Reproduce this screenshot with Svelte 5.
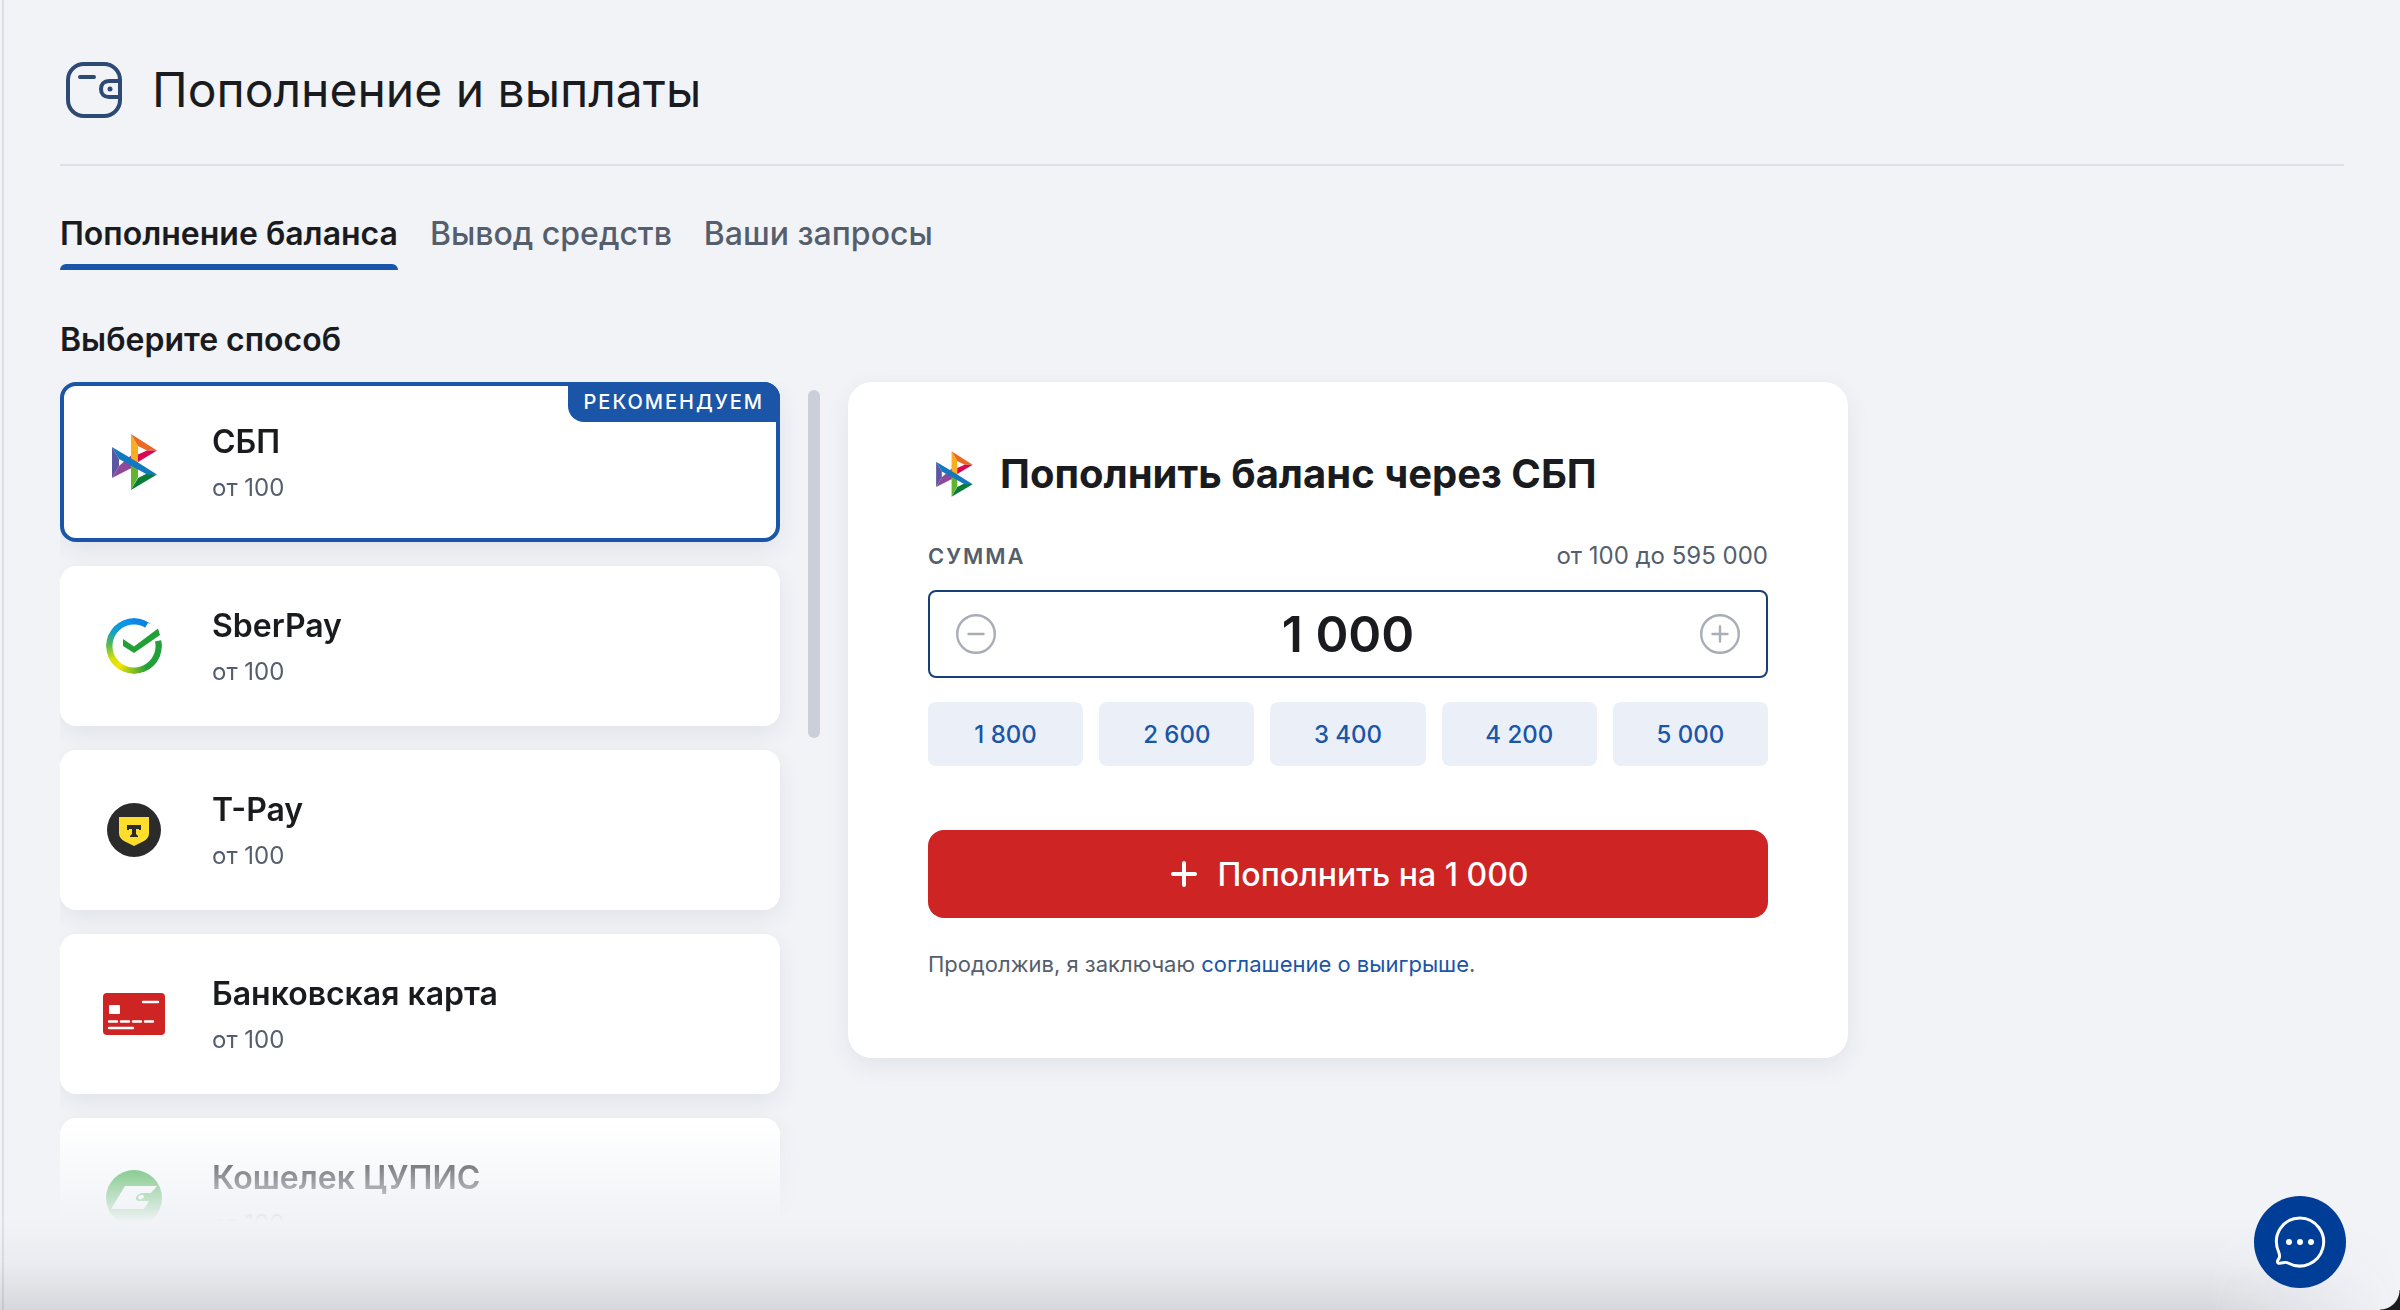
<script lang="ts">
    type Method = { id: string, name: string, from: string, recommended?: boolean }

    const methods: Method[] = [
        { id: "sbp", name: "СБП", from: "от 100", recommended: true },
        { id: "sber", name: "SberPay", from: "от 100" },
        { id: "tpay", name: "T-Pay", from: "от 100" },
        { id: "card", name: "Банковская карта", from: "от 100" },
        { id: "cupis", name: "Кошелек ЦУПИС", from: "от 100" },
    ]
    const tabs = ["Пополнение баланса", "Вывод средств", "Ваши запросы"]
    const presets = [1800, 2600, 3400, 4200, 5000]
    const min = 100
    const max = 595000

    let tab = $state(0)
    let selected = $state("sbp")
    let amount = $state(1000)
    let list: HTMLDivElement
    let scrolled = $state(0)
    let method = $derived(methods.find((m) => m.id === selected)!)

    /** Group digits by thousands */
    function format(n: number){
        return String(n).replace(/\B(?=(\d{3})+$)/g, " ")
    }

    function setAmount(n: number){
        amount = Math.min(max, Math.max(min, n))
    }

    function onAmountChange(e: Event){
        const input = e.target as HTMLInputElement
        setAmount(Number(input.value.replace(/\D/g, "")))
        input.value = format(amount)
    }

    /** Move the custom scroll thumb along with the list */
    function onScroll(){
        const range = list.scrollHeight - list.clientHeight
        scrolled = range > 0 ? list.scrollTop / range : 0
    }
</script>

{#snippet logo(id: string)}
    {#if id === "sbp"}
        <svg viewBox="0 0 64 64" aria-hidden="true">
            <path d="M10 17 17 29V36L10 48z" fill="#5b57a2" />
            <path d="M29.500 25 37 29.500 29.500 38 10 48 17 36z" fill="#90489a" />
            <path d="M29 4 36 16V36L29 32z" fill="#f8ae1f" />
            <path d="M36 16 45 20.500 55 20.500 29 4z" fill="#ea6a24" />
            <path d="M36 24.500 45 20.500H55L36 32z" fill="#d90751" />
            <path d="M29 33 36 38V47L29 60z" fill="#63b32e" />
            <path d="M36 48 45 43.500 55 44.500 29 60z" fill="#087d38" />
            <path d="M10 17 36 32.500 55 44.500H45L17 29z" fill="#1279c0" />
        </svg>
    {:else if id === "sber"}
        <svg viewBox="0 0 64 64" aria-hidden="true">
            <foreignObject x="4" y="4" width="56" height="56"><div class="ring"></div></foreignObject>
            <path d="M32 32 46 9 62 14 60 26z" fill="#fff" />
            <path d="M21 25 32 32.500 56 14.500 58 21 32 39 21 32z" fill="#21a038" />
        </svg>
    {:else if id === "tpay"}
        <svg viewBox="0 0 64 64" aria-hidden="true">
            <circle cx="32" cy="32" r="27" fill="#2b2b2b" />
            <path d="M17 19H47V35C47 39 45 41 42 43L32 48 22 43C19 41 17 39 17 35z" fill="#ffdd2d" />
            <path d="M25 27H39V32H37V31H34V36L36 38V39H28V38L30 36V31H27V32H25z" fill="#2b2b2b" />
        </svg>
    {:else if id === "card"}
        <svg viewBox="0 0 64 64" aria-hidden="true">
            <rect x="1" y="11" width="62" height="42" rx="4" fill="#ce2424" />
            <rect x="7" y="23" width="11" height="9" rx="1" fill="#fff" />
            <path d="M41 20H56M7 39.500H15M19 39.500H27M31 39.500H39M43 39.500H51M7 46H31" stroke="#fff" stroke-width="2.400" stroke-linecap="round" />
        </svg>
    {:else}
        <svg viewBox="0 0 64 64" aria-hidden="true">
            <circle cx="32" cy="32" r="28" fill="#22a62e" />
            <path d="M23 20H55L49 27H42C34 27 31 35 37 35H47L42 43H9z" fill="#fff" />
            <ellipse cx="39" cy="31" rx="3" ry="2" transform="rotate(-25 39 31)" fill="#fff" />
        </svg>
    {/if}
{/snippet}

<main class="page">
    <header>
        <svg class="wallet" viewBox="0 0 56 56" aria-hidden="true">
            <rect x="2" y="2" width="52" height="52" rx="16" />
            <path d="M14 15H28M54 19H43C38 19 35 22 35 27S38 35 43 35H54" />
            <circle class="dot" cx="44" cy="27" r="2.500" />
        </svg>
        <h1>Пополнение и выплаты</h1>
    </header>

    <nav class="tabs">
        {#each tabs as name, i}
            <button class="tab" class:active={tab === i} onclick={() => tab = i}>{name}</button>
        {/each}
    </nav>

    <h2>Выберите способ</h2>

    <div class="columns">
        <div class="methods">
            <div class="list" bind:this={list} onscroll={onScroll}>
                {#each methods as m}
                    <button class="method" class:selected={m.id === selected} onclick={() => selected = m.id}>
                        <span class="logo">{@render logo(m.id)}</span>
                        <span class="info">
                            <span class="name">{m.name}</span>
                            <span class="from">{m.from}</span>
                        </span>
                        {#if m.recommended}
                            <span class="badge">Рекомендуем</span>
                        {/if}
                    </button>
                {/each}
            </div>
            <div class="track"><div class="thumb" style="top:{scrolled * 57}%"></div></div>
        </div>

        <section class="panel">
            <h3>
                <span class="panel-logo">{@render logo(method.id)}</span>
                Пополнить баланс через {method.name}
            </h3>
            <div class="labels">
                <label for="amount">Сумма</label>
                <span class="limits">от {format(min)} до {format(max)}</span>
            </div>
            <div class="amount">
                <button aria-label="Уменьшить" onclick={() => setAmount(amount - 100)}>
                    <svg viewBox="0 0 40 40"><circle cx="20" cy="20" r="18.800" /><path d="M12.500 20H27.500" /></svg>
                </button>
                <input id="amount" type="text" inputmode="numeric" value={format(amount)} onchange={onAmountChange} />
                <button aria-label="Увеличить" onclick={() => setAmount(amount + 100)}>
                    <svg viewBox="0 0 40 40"><circle cx="20" cy="20" r="18.800" /><path d="M12.500 20H27.500M20 12.500V27.500" /></svg>
                </button>
            </div>
            <div class="presets">
                {#each presets as p}
                    <button onclick={() => setAmount(p)}>{format(p)}</button>
                {/each}
            </div>
            <button class="submit">
                <svg viewBox="0 0 32 32" aria-hidden="true"><path d="M17 5V27M6 16H28" /></svg>
                Пополнить на {format(amount)}
            </button>
            <p class="terms">Продолжив, я заключаю <a href="#terms">соглашение о выигрыше</a>.</p>
        </section>
    </div>
</main>

<div class="shade"></div>
<button class="chat" aria-label="Чат поддержки">
    <svg viewBox="0 0 52 52">
        <path d="M5 37C-3 19 9 2 26 2A24 24 0 1 1 14 47C11 45 8 48 4 47C3 46 3 46 4 44C6 42 6 40 5 37z" />
        <circle cx="15" cy="26" r="3" /><circle cx="26" cy="26" r="3" /><circle cx="37" cy="26" r="3" />
    </svg>
</button>
<div class="corner"></div>

<style>
    :global(body){
        background-color: #f1f3f7;
        overflow: hidden;
    }
    .page, .chat{
        font-family: Inter, "Liberation Sans", sans-serif;
        color: #1a1b1f;
    }
    .page{
        box-sizing: border-box;
        min-height: 100vh;
        margin-left: 2px;
        padding: 56px 56px 0;
        border-left: 2px solid #dcdfe6;
    }
    button{
        font: inherit;
        color: inherit;
        border: none;
        background: none;
        padding: 0;
        cursor: pointer;
    }
    h1, h2, h3, p{
        margin: 0;
    }
    svg{
        display: block;
        fill: none;
    }
    header{
        display: flex;
        align-items: center;
        gap: 30px;
        height: 68px;
        padding: 0 6px 40px;
        border-bottom: 2px solid #dcdfe6;
    }
    .wallet{
        width: 56px;
        height: 56px;
        stroke: #2c4a73;
        stroke-width: 4;
        stroke-linecap: round;
    }
    .wallet .dot{
        fill: #2c4a73;
        stroke: none;
    }
    h1{
        font-size: 48px;
        font-weight: 400;
        line-height: 68px;
    }
    .tabs{
        display: flex;
        gap: 32px;
        margin-top: 44px;
    }
    .tab{
        font-size: 32px;
        font-weight: 500;
        line-height: 48px;
        color: #545e6c;
    }
    .tab.active{
        font-weight: 600;
        color: #1a1b1f;
    }
    .tab::after{
        content: "";
        display: block;
        height: 6px;
        margin-top: 6px;
        border-radius: 6px 6px 0 0;
    }
    .tab.active::after{
        background-color: #1a55a8;
    }
    h2{
        font-size: 32px;
        font-weight: 600;
        line-height: 48px;
        margin: 46px 0 18px;
    }
    .columns{
        display: flex;
        align-items: flex-start;
        gap: 28px;
    }
    .methods{
        display: flex;
        width: 760px;
        height: 840px;
    }
    .list{
        box-sizing: border-box;
        flex: 1;
        display: flex;
        flex-direction: column;
        gap: 24px;
        padding-right: 28px;
        overflow-y: auto;
        scrollbar-width: none;
        mask-image: linear-gradient(#000 calc(100% - 104px), transparent);
    }
    .method{
        box-sizing: border-box;
        position: relative;
        flex-shrink: 0;
        display: flex;
        align-items: center;
        gap: 46px;
        height: 160px;
        padding: 0 38px;
        border: 4px solid #fff;
        border-radius: 16px;
        background-color: #fff;
        box-shadow: 0 8px 24px rgba(40,50,70,.08);
        text-align: left;
    }
    .method.selected{
        border-color: #1a55a8;
    }
    .logo{
        width: 64px;
    }
    .info{
        display: flex;
        flex-direction: column;
        gap: 8px;
    }
    .name{
        font-size: 32px;
        font-weight: 600;
        line-height: 44px;
    }
    .from{
        font-size: 24px;
        line-height: 32px;
        color: #545e6c;
    }
    .badge{
        position: absolute;
        top: -4px;
        right: -4px;
        padding: 4px 16px;
        border-radius: 0 16px 0 16px;
        background-color: #1a55a8;
        color: #fff;
        font-size: 20px;
        font-weight: 500;
        line-height: 32px;
        letter-spacing: 2px;
        text-transform: uppercase;
    }
    .track{
        position: relative;
        width: 12px;
        margin: 8px 0;
    }
    .thumb{
        position: absolute;
        width: 100%;
        height: 348px;
        border-radius: 6px;
        background-color: #cbcfda;
    }
    .ring{
        height: 100%;
        border-radius: 50%;
        background: conic-gradient(#0d86e8 0deg, #0f7fd0 60deg, #21a038 75deg, #21a038 150deg, #8fc31e 185deg, #f2e500 215deg, #d5df0c 240deg, #4fb857 275deg, #13a0c8 305deg, #0d93f0 345deg, #0d86e8);
        mask: radial-gradient(circle, transparent 21px, #000 22px);
    }
    .panel{
        box-sizing: border-box;
        width: 1000px;
        padding: 64px 80px 76px;
        border-radius: 24px;
        background-color: #fff;
        box-shadow: 0 8px 24px rgba(40,50,70,.08);
    }
    h3{
        display: flex;
        align-items: center;
        gap: 20px;
        font-size: 40px;
        font-weight: 700;
        line-height: 56px;
    }
    .panel-logo{
        width: 52px;
    }
    .labels{
        display: flex;
        justify-content: space-between;
        margin: 36px 0 16px;
        font-size: 24px;
        line-height: 36px;
        color: #545e6c;
    }
    .labels label{
        font-size: 22px;
        font-weight: 600;
        letter-spacing: 2px;
        text-transform: uppercase;
    }
    .amount{
        display: flex;
        align-items: center;
        height: 84px;
        padding: 0 26px;
        border: 2px solid #163f7a;
        border-radius: 8px;
    }
    .amount svg{
        width: 40px;
        height: 40px;
        stroke: #a9adb6;
        stroke-width: 2.4;
        stroke-linecap: round;
    }
    .amount input{
        flex: 1;
        min-width: 0;
        border: none;
        outline: none;
        background: none;
        font: 600 50px/60px Inter, "Liberation Sans", sans-serif;
        color: #1a1b1f;
        text-align: center;
    }
    .presets{
        display: grid;
        grid-template-columns: repeat(5, 1fr);
        gap: 16px;
        margin: 24px 0 64px;
    }
    .presets button{
        height: 64px;
        border-radius: 8px;
        background-color: #ebf0f8;
        color: #1a55a8;
        font-size: 24px;
        font-weight: 500;
    }
    .submit{
        display: flex;
        align-items: center;
        justify-content: center;
        gap: 18px;
        width: 100%;
        height: 88px;
        border-radius: 16px;
        background-color: #ce2424;
        color: #fff;
        font-size: 32px;
        font-weight: 500;
    }
    .submit svg{
        width: 32px;
        height: 32px;
        stroke: #fff;
        stroke-width: 4;
        stroke-linecap: round;
    }
    .terms{
        margin-top: 28px;
        font-size: 22px;
        line-height: 36px;
        color: #545e6c;
    }
    .terms a{
        color: #1a55a8;
        text-decoration: none;
    }
    .shade{
        position: fixed;
        inset: auto 0 0;
        height: 90px;
        background: linear-gradient(rgba(60,62,70,0), rgba(60,62,70,.04) 50%, rgba(60,62,70,.15));
        mask-image: linear-gradient(to right, #000 92%, transparent);
        pointer-events: none;
    }
    .chat{
        position: fixed;
        right: 54px;
        bottom: 22px;
        display: flex;
        align-items: center;
        justify-content: center;
        width: 92px;
        height: 92px;
        border-radius: 50%;
        background-color: #003d96;
    }
    .chat svg{
        width: 52px;
        height: 52px;
    }
    .chat path{
        stroke: #fff;
        stroke-width: 3;
    }
    .chat circle{
        fill: #fff;
    }
    .corner{
        position: fixed;
        right: 0;
        bottom: 0;
        width: 20px;
        height: 20px;
        background: radial-gradient(circle at 0 0, transparent 19px, #1c1c1e 20px);
    }
</style>
